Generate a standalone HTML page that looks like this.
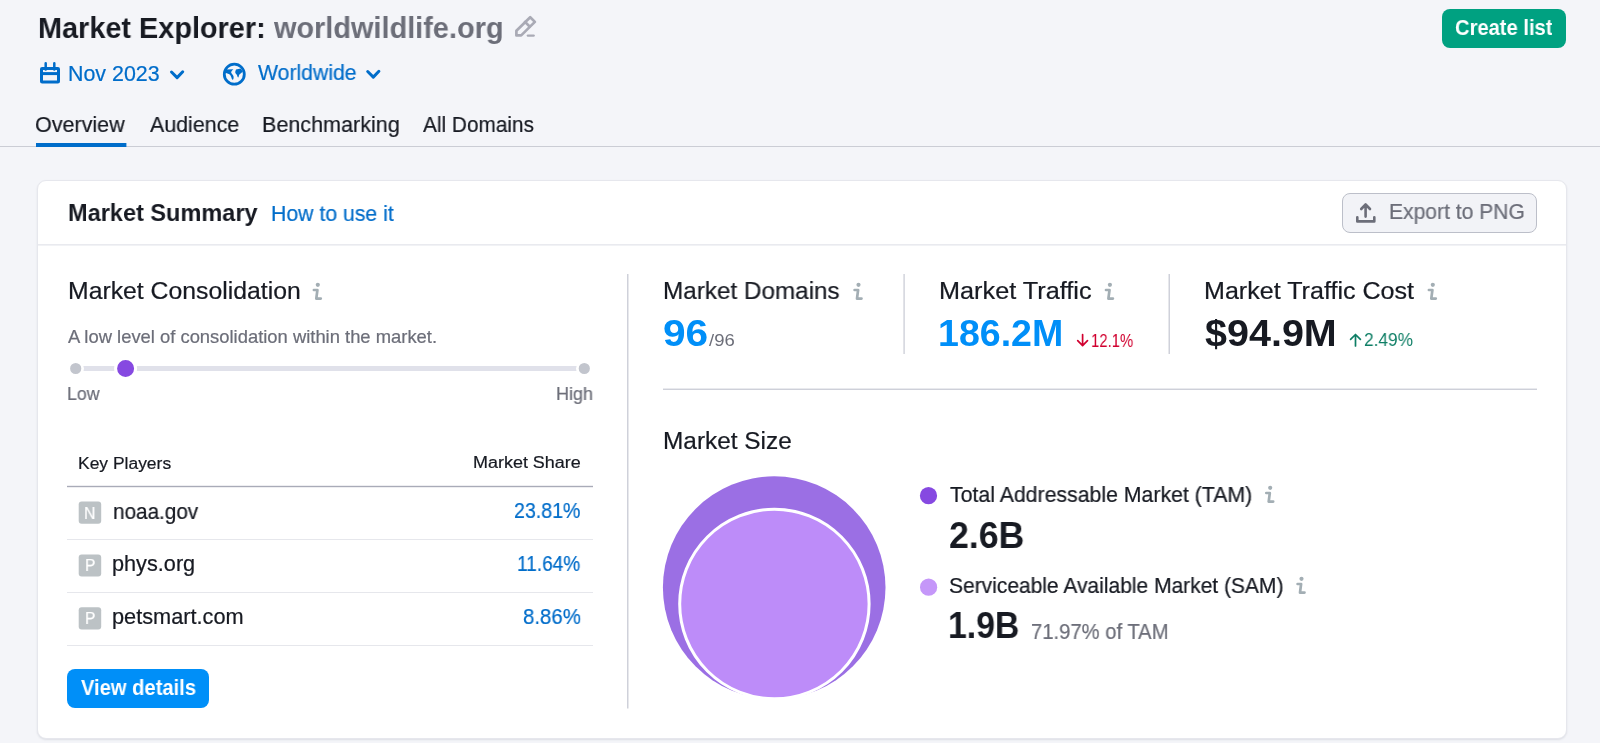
<!DOCTYPE html>
<html>
<head>
<meta charset="utf-8">
<style>
html,body{margin:0;padding:0;}
body{width:1600px;height:743px;overflow:hidden;background:#f4f5f9;position:relative;font-family:"Liberation Sans",sans-serif;color:#171a22;}
.t{position:absolute;white-space:nowrap;line-height:1;will-change:transform;transform-origin:0 0;-webkit-text-stroke:0.22px currentColor;}
.t.bd{-webkit-text-stroke:0;}
.b{font-weight:bold;}
.g{color:#6c6e79;}
.bl{color:#006dca;}
#card{position:absolute;left:37px;top:180px;width:1528px;height:557px;background:#fff;border:1px solid #e6e7ed;border-radius:9px;box-shadow:0 1px 2px rgba(30,35,60,.10);}
#ov{position:absolute;left:0;top:0;}
.btn{position:absolute;box-sizing:border-box;}
</style>
</head>
<body>
<div id="card"></div>
<div class="btn" style="left:1442px;top:8.6px;width:123.5px;height:39.4px;background:#00a181;border-radius:8px;"></div>
<div class="btn" style="left:1342px;top:193px;width:195px;height:39.6px;background:#f2f3f7;border:1px solid #bcbfc9;border-radius:8px;"></div>
<div class="btn" style="left:67px;top:669px;width:142px;height:39.4px;background:#008ff8;border-radius:8px;"></div>
<svg id="ov" width="1600" height="743" viewBox="0 0 1600 743">
  <!-- pencil -->
  <g fill="none" stroke="#a9aab5" stroke-width="2.7" stroke-linejoin="round" stroke-linecap="round" transform="translate(510,12)">
    <path d="M6.4 23.4 V18.8 L20.2 5.2 L24.9 9.9 L11.2 23.4 Z"/>
    <path d="M15 9.9 L19.6 14.5"/>
    <path d="M17.9 23.6 H23.6" stroke-width="2.4"/>
  </g>
  <!-- calendar -->
  <g fill="none" stroke="#006dca" transform="translate(40,62)">
    <rect x="1.5" y="6.5" width="17" height="13.5" rx="0.6" stroke-width="3"/>
    <path d="M1.5 11.6 H18.5" stroke-width="3"/>
    <path d="M5.7 1.3 V7.6 M14.3 1.3 V7.6" stroke-width="2.5" stroke-linecap="round"/>
  </g>
  <!-- chevrons -->
  <g fill="none" stroke="#006dca" stroke-width="3" stroke-linecap="round" stroke-linejoin="round">
    <path d="M171.5 72 L177.1 77.6 L182.7 71.8"/>
    <path d="M367.7 71.5 L373.3 77.1 L378.9 71.3"/>
  </g>
  <!-- globe -->
  <g transform="translate(220,60)">
    <circle cx="14.3" cy="14.2" r="10" fill="none" stroke="#006dca" stroke-width="2.8"/>
    <path fill="#006dca" d="M5.5 9.6 L13.4 9.3 C12.2 10.4 11 11.6 11.2 12.8 C11.6 13.8 13.4 14.8 13.6 16.8 C13.7 18.6 13.3 19.8 12.7 19.8 C12 19.8 11.7 18.4 11.3 17.2 C10.6 15 9.5 13.8 5.5 13 Z"/>
    <path fill="#006dca" d="M16 9.6 L20.6 8.4 L23 11.8 C21.4 13 19.6 14 19 15.2 C18.8 16.3 18.6 17.6 18.1 17.5 C17.4 17.2 17.3 15.2 16.6 14.4 C15.5 13.3 15 12.5 15.3 11.4 Z"/>
  </g>
  <!-- tabs underline & border -->
  <rect x="0" y="146" width="1600" height="1" fill="#cbcdd5"/>
  <rect x="36" y="143" width="90.4" height="4" fill="#006dca"/>
  <!-- card header divider -->
  <rect x="38" y="244.2" width="1528" height="1.3" fill="#e4e5eb"/>
  <!-- export icon -->
  <g fill="none" stroke="#6c6e79" stroke-width="2.6" stroke-linecap="round" stroke-linejoin="round">
    <path d="M1361.2 209 L1365.6 204.5 L1370 209 M1365.6 204.8 V216.6"/>
    <path d="M1357.3 217.2 V221.4 H1374.3 V217.2"/>
  </g>
  <!-- info icons -->
  <defs>
    <g id="info">
      <circle cx="5.5" cy="1.8" r="2.1" fill="#a3aeb4"/>
      <path d="M1.6 7 H5.1 L4.0 15.6 H8.5" fill="none" stroke="#a3aeb4" stroke-width="2.7" stroke-linecap="round" stroke-linejoin="round"/>
    </g>
  </defs>
  <use href="#info" x="312.3" y="283"/>
  <use href="#info" x="853" y="283"/>
  <use href="#info" x="1104.4" y="283"/>
  <use href="#info" x="1427.3" y="283"/>
  <use href="#info" x="1264.7" y="486"/>
  <use href="#info" x="1296" y="577"/>
  <!-- slider -->
  <rect x="72" y="366" width="515" height="5" rx="2.5" fill="#e0e1ea"/>
  <circle cx="75.7" cy="368.5" r="6.95" fill="#c2c5cd" stroke="#fff" stroke-width="2.7"/>
  <circle cx="584.3" cy="368.5" r="6.95" fill="#c2c5cd" stroke="#fff" stroke-width="2.7"/>
  <circle cx="125.6" cy="368.5" r="10" fill="#8649e1" stroke="#fff" stroke-width="3"/>
  <!-- table lines -->
  <rect x="67" y="485.8" width="526" height="1.4" fill="#a9abb8"/>
  <rect x="67" y="539" width="526" height="1" fill="#e6e7ec"/>
  <rect x="67" y="592" width="526" height="1" fill="#e6e7ec"/>
  <rect x="67" y="645" width="526" height="1" fill="#e6e7ec"/>
  <!-- favicons -->
  <rect x="78.7" y="501.6" width="22.5" height="22.2" rx="3" fill="#bcc2c5"/>
  <rect x="78.7" y="554.4" width="22.5" height="22.2" rx="3" fill="#bcc2c5"/>
  <rect x="78.7" y="607.2" width="22.5" height="22.2" rx="3" fill="#bcc2c5"/>
  <!-- vertical dividers -->
  <rect x="627" y="274" width="1.5" height="434.5" fill="#cfd1da"/>
  <rect x="903.4" y="274" width="1.4" height="80" fill="#cfd1da"/>
  <rect x="1168.5" y="274" width="1.5" height="80" fill="#cfd1da"/>
  <rect x="663" y="388.6" width="874" height="1.3" fill="#c9cbd5"/>
  <!-- delta arrows -->
  <g fill="none" stroke="#d1002f" stroke-width="1.7" stroke-linecap="round" stroke-linejoin="round">
    <path d="M1082.6 334.5 V345.5 M1077.7 340.7 L1082.6 345.6 L1087.5 340.7"/>
  </g>
  <g fill="none" stroke="#0e7e65" stroke-width="1.7" stroke-linecap="round" stroke-linejoin="round">
    <path d="M1355.5 334.6 V346 M1350.6 339.4 L1355.5 334.5 L1360.4 339.4"/>
  </g>
  <!-- market size circles -->
  <circle cx="774.2" cy="587.6" r="111.3" fill="#9b6fe4"/>
  <circle cx="774.4" cy="604" r="94.7" fill="#bd8cf9" stroke="#fff" stroke-width="3"/>
  <circle cx="928.5" cy="495.7" r="8.6" fill="#8649e1"/>
  <circle cx="928.6" cy="587.2" r="8.6" fill="#c597f9"/>
</svg>
<div class="t bd" style="left:38.30px;top:13.00px;font-size:30.3px;font-weight:bold;color:#171a22;transform:scaleX(0.9523);">Market Explorer:</div>
<div class="t bd" style="left:273.51px;top:13.00px;font-size:30.3px;font-weight:bold;color:#6c6e79;transform:scaleX(0.9535);">worldwildlife.org</div>
<div class="t bd" style="left:1454.87px;top:18.00px;font-size:21.3px;font-weight:bold;color:#fff;transform:scaleX(0.9460);">Create list</div>
<div class="t" style="left:67.80px;top:64.00px;font-size:21.4px;color:#006dca;">Nov 2023</div>
<div class="t" style="left:257.50px;top:63.00px;font-size:21.4px;color:#006dca;transform:scaleX(0.9909);">Worldwide</div>
<div class="t" style="left:35.45px;top:113.00px;font-size:22.7px;color:#171a22;transform:scaleX(0.9479);">Overview</div>
<div class="t" style="left:150.21px;top:113.00px;font-size:22.7px;color:#171a22;transform:scaleX(0.9425);">Audience</div>
<div class="t" style="left:262.25px;top:113.00px;font-size:22.7px;color:#171a22;transform:scaleX(0.9497);">Benchmarking</div>
<div class="t" style="left:423.11px;top:113.00px;font-size:22.7px;color:#171a22;transform:scaleX(0.9165);">All Domains</div>
<div class="t bd" style="left:67.65px;top:201.00px;font-size:24.8px;font-weight:bold;color:#171a22;transform:scaleX(0.9487);">Market Summary</div>
<div class="t" style="left:270.61px;top:204.00px;font-size:21.4px;color:#006dca;transform:scaleX(0.9927);">How to use it</div>
<div class="t" style="left:1388.71px;top:202.00px;font-size:21.4px;color:#6c6e79;transform:scaleX(0.9853);">Export to PNG</div>
<div class="t" style="left:67.68px;top:279.00px;font-size:24.4px;color:#171a22;transform:scaleX(1.0159);">Market Consolidation</div>
<div class="t" style="left:68.11px;top:328.00px;font-size:18.4px;color:#6c6e79;">A low level of consolidation within the market.</div>
<div class="t" style="left:67.24px;top:385.00px;font-size:18.4px;color:#6c6e79;transform:scaleX(0.9636);">Low</div>
<div class="t" style="left:555.62px;top:385.00px;font-size:18.4px;color:#6c6e79;transform:scaleX(0.9806);">High</div>
<div class="t" style="left:78.49px;top:455.00px;font-size:17.3px;color:#171a22;transform:scaleX(1.0099);">Key Players</div>
<div class="t" style="left:473.46px;top:454.00px;font-size:17.3px;color:#171a22;transform:scaleX(1.0392);">Market Share</div>
<div class="t" style="left:112.83px;top:502.00px;font-size:21.4px;color:#171a22;transform:scaleX(0.9678);">noaa.gov</div>
<div class="t" style="left:112.19px;top:554.00px;font-size:21.4px;color:#171a22;transform:scaleX(1.0138);">phys.org</div>
<div class="t" style="left:112.48px;top:607.00px;font-size:21.4px;color:#171a22;transform:scaleX(1.0164);">petsmart.com</div>
<div class="t" style="left:514.40px;top:501.00px;font-size:21.4px;color:#006dca;transform:scaleX(0.9153);">23.81%</div>
<div class="t" style="left:517.01px;top:554.00px;font-size:21.4px;color:#006dca;transform:scaleX(0.8900);">11.64%</div>
<div class="t" style="left:522.98px;top:607.00px;font-size:21.4px;color:#006dca;transform:scaleX(0.9533);">8.86%</div>
<div class="t bd" style="left:81.00px;top:678.00px;font-size:21.3px;font-weight:bold;color:#fff;transform:scaleX(0.9463);">View details</div>
<div class="t" style="left:84.08px;top:505.00px;font-size:17.3px;color:#fff;transform:scaleX(0.9182);">N</div>
<div class="t" style="left:84.60px;top:557.00px;font-size:17.3px;color:#fff;transform:scaleX(0.9000);">P</div>
<div class="t" style="left:84.60px;top:610.00px;font-size:17.3px;color:#fff;transform:scaleX(0.9000);">P</div>
<div class="t" style="left:663.31px;top:279.00px;font-size:24.4px;color:#171a22;transform:scaleX(0.9949);">Market Domains</div>
<div class="t" style="left:939.26px;top:279.00px;font-size:24.4px;color:#171a22;transform:scaleX(1.0356);">Market Traffic</div>
<div class="t" style="left:1204.37px;top:279.00px;font-size:24.4px;color:#171a22;transform:scaleX(1.0288);">Market Traffic Cost</div>
<div class="t bd" style="left:663.49px;top:316.00px;font-size:36.6px;font-weight:bold;color:#008ff8;transform:scaleX(1.1116);">96</div>
<div class="t bd" style="left:708.90px;top:332.00px;font-size:17.3px;color:#6c6e79;transform:scaleX(1.0708);">/96</div>
<div class="t bd" style="left:938.25px;top:316.00px;font-size:36.6px;font-weight:bold;color:#008ff8;transform:scaleX(1.0271);">186.2M</div>
<div class="t bd" style="left:1091.19px;top:332.00px;font-size:18.4px;color:#d1002f;transform:scaleX(0.8098);">12.1%</div>
<div class="t bd" style="left:1204.79px;top:316.00px;font-size:36.6px;font-weight:bold;color:#171a22;transform:scaleX(1.0801);">$94.9M</div>
<div class="t bd" style="left:1364.29px;top:331.00px;font-size:18.4px;color:#0e7e65;transform:scaleX(0.9406);">2.49%</div>
<div class="t" style="left:662.90px;top:429.00px;font-size:24.4px;color:#171a22;">Market Size</div>
<div class="t" style="left:949.50px;top:485.00px;font-size:21.4px;color:#171a22;transform:scaleX(0.9944);">Total Addressable Market (TAM)</div>
<div class="t bd" style="left:949.32px;top:518.00px;font-size:36.6px;font-weight:bold;color:#171a22;transform:scaleX(0.9760);">2.6B</div>
<div class="t" style="left:948.72px;top:576.00px;font-size:21.4px;color:#171a22;transform:scaleX(0.9814);">Serviceable Available Market (SAM)</div>
<div class="t bd" style="left:948.15px;top:608.00px;font-size:36.6px;font-weight:bold;color:#171a22;transform:scaleX(0.9243);">1.9B</div>
<div class="t" style="left:1030.87px;top:622.00px;font-size:21.4px;color:#6c6e79;transform:scaleX(0.9453);">71.97% of TAM</div>



<!-- card -->














</body>
</html>
